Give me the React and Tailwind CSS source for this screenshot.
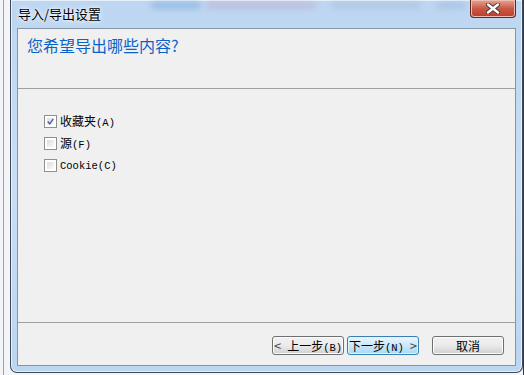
import React from "react";

const cjk = { fontFamily: '"Noto Sans CJK SC", "Noto Sans", sans-serif' };
const mono = { fontFamily: '"Liberation Mono", "DejaVu Sans Mono", monospace' };

function Checkbox({ checked }) {
	return (
		<div className="w-[13px] h-[13px] border border-[#8e8f8f] bg-white p-[2px] shrink-0">
			<div className="w-full h-full bg-gradient-to-br from-[#dcdcdc] to-[#fbfbfb] flex items-center justify-center">
				{checked && (
					<svg width="9" height="9" viewBox="0 0 9 9">
						<path d="M1 4.5 L3.5 7.5 L8 1" fill="none" stroke="#4a5f97" strokeWidth="1.8" />
					</svg>
				)}
			</div>
		</div>
	);
}

function Option({ checked, han, key_, latin }) {
	return (
		<div className="flex items-center gap-[3px] h-[13px]">
			<Checkbox checked={checked} />
			<span className="text-[12px] leading-[14px] text-black flex items-baseline">
				{han && <span style={cjk}>{han}</span>}
				<span style={mono} className="text-[10.5px]">
					{latin}({key_})
				</span>
			</span>
		</div>
	);
}

function Button({ children, primary }) {
	return (
		<button
			className={
				primary
					? "w-[72px] h-[19px] rounded-[3px] border border-[#3c7fb1] bg-gradient-to-b from-[#eaf6fd] to-[#a7d9f5] shadow-[inset_0_0_0_1px_#def2fc] flex items-baseline justify-center pt-[1px] text-[12px] leading-[15px] text-black"
					: "w-[72px] h-[19px] rounded-[3px] border border-[#707070] bg-gradient-to-b from-[#f2f2f2] via-[#ebebeb] to-[#cfcfcf] shadow-[inset_0_0_0_1px_#fcfcfc] flex items-baseline justify-center pt-[1px] text-[12px] leading-[15px] text-black"
			}
			style={cjk}
		>
			{children}
		</button>
	);
}

export default function App() {
	return (
		<div className="w-[524px] h-[375px] bg-[#f3f5f8] flex overflow-hidden relative">
			<div className="w-[10px] h-full flex">
				<div className="w-[3px]" />
				<div className="w-px h-full bg-[#9aa0a6]" />
			</div>
			<div className="w-[513px] h-[373px] border border-t-0 border-[#3e4a57] rounded-b-[7px] bg-gradient-to-b from-[#bdd6f1] via-[#c9def5] to-[#bcd5f0] shadow-[inset_0_0_0_1px_#e6f0fb] flex flex-col px-[6px] pb-[6px] relative overflow-hidden">
				<div className="absolute left-[140px] top-[2px] w-[50px] h-[7px] rounded-full bg-[#3f7fc7] opacity-30 blur-[3px]" />
				<div className="absolute left-[195px] top-[2px] w-[110px] h-[7px] rounded-full bg-[#b7648a] opacity-20 blur-[3px]" />
				<div className="absolute left-[320px] top-[2px] w-[90px] h-[7px] rounded-full bg-[#7f93a8] opacity-20 blur-[3px]" />
				<div className="absolute left-[425px] top-[2px] w-[30px] h-[7px] rounded-full bg-[#5b84b8] opacity-20 blur-[3px]" />
				<div className="h-[28px] flex justify-between items-start pl-[1px] relative">
					<span
						className="mt-[6px] text-[13px] leading-[16px] text-black [text-shadow:0_0_6px_#ffffff,0_0_3px_#ffffff]"
						style={cjk}
					>
						导入/导出设置
					</span>
					<div className="w-[46px] h-[18px] rounded-b-[4px] border border-t-0 border-[#5a2a22] bg-gradient-to-b from-[#e8a493] via-[#c75a45] to-[#c0392b] shadow-[inset_0_0_0_1px_#eebcb0] flex items-center justify-center">
						<svg width="14" height="11" viewBox="0 0 14 11">
							<path d="M2 1.5 L12 9.5 M12 1.5 L2 9.5" stroke="#3a3a3a" strokeWidth="4.2" strokeLinecap="round" />
							<path d="M2 1.5 L12 9.5 M12 1.5 L2 9.5" stroke="#ffffff" strokeWidth="2.4" strokeLinecap="round" />
						</svg>
					</div>
				</div>
				<div className="flex-1 border border-[#8395a7] bg-[#f0f0f0] flex flex-col">
					<div className="h-[60px] border-b border-[#a0a0a0] pl-[9px] pt-[5px]">
						<span className="text-[16px] leading-[20px] text-[#0b63c8]" style={cjk}>
							您希望导出哪些内容?
						</span>
					</div>
					<div className="flex-1 pl-[26px] pt-[26px] flex flex-col gap-[9px]">
						<Option checked han="收藏夹" key_="A" latin="" />
						<Option han="源" key_="F" latin="" />
						<Option key_="C" latin="Cookie" />
					</div>
					<div className="h-[43px] border-t border-[#a0a0a0] flex justify-end items-start pt-[13px] pr-[11px]">
						<div className="flex gap-[3px]">
							<Button>
								<span className="mr-[6px] text-[13px] text-[#444]">&lt;</span>上一步
								<span style={mono} className="text-[10.5px]">(B)</span>
							</Button>
							<Button primary>
								下一步<span style={mono} className="text-[10.5px]">(N)</span>
								<span className="ml-[6px] text-[13px] text-[#444]">&gt;</span>
							</Button>
						</div>
						<div className="ml-[13px]">
							<Button>取消</Button>
						</div>
					</div>
				</div>
			</div>
			<div className="flex-1 bg-[#2f3a46]" />
		</div>
	);
}
